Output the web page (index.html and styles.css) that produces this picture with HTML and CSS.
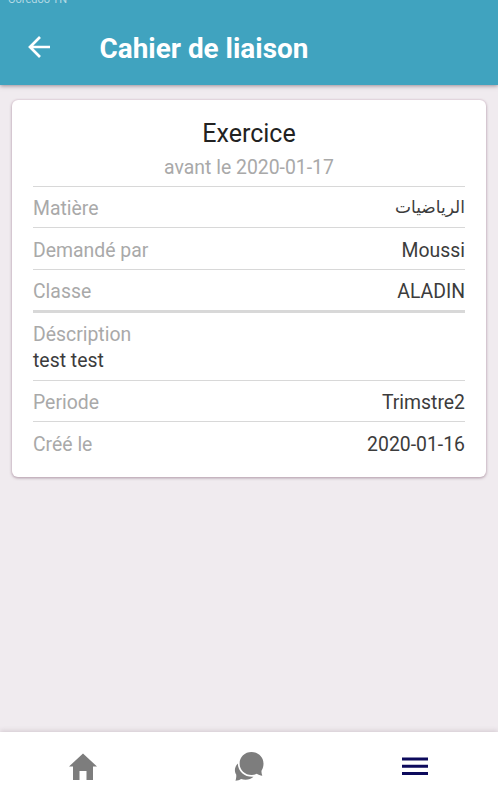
FILE: index.html
```html
<!DOCTYPE html>
<html lang="fr">
  <head>
    <meta charset="UTF-8" />
    <title>Cahier de liaison</title>
    <meta name="viewport" content="width=device-width, initial-scale=1.0" />
    <link rel="stylesheet" href="styles.css">
  </head>
  <body>
    <header>
      <div class="status">Ooredoo TN</div>
      <div class="toolbar">
        <a href="#" class="back" aria-label="Retour">
          <svg width="22" height="22" viewBox="0 0 22 22" fill="none" stroke="#fff" stroke-width="2.7">
            <path d="M22 11H2M12 1L2 11l10 10" />
          </svg>
        </a>
        <h1>Cahier de liaison</h1>
      </div>
    </header>

    <main>
      <div class="card">
        <div class="card-head">
          <h2>Exercice</h2>
          <p>avant le 2020-01-17</p>
        </div>
        <div class="row">
          <span class="label">Matière</span>
          <span class="arabic" lang="ar" dir="rtl">الرياضيات</span>
        </div>
        <div class="row">
          <span class="label">Demandé par</span>
          <span>Moussi</span>
        </div>
        <div class="row">
          <span class="label">Classe</span>
          <span>ALADIN</span>
        </div>
        <div class="description">
          <div class="label">Déscription</div>
          <div>test test</div>
        </div>
        <div class="row">
          <span class="label">Periode</span>
          <span>Trimstre2</span>
        </div>
        <div class="row">
          <span class="label">Créé le</span>
          <span>2020-01-16</span>
        </div>
      </div>
    </main>

    <nav>
      <a href="#" aria-label="Accueil">
        <svg width="28" height="28" viewBox="0 0 28 28" fill="#7d7d7d">
          <path d="M14 0.500L28 13.500H24v13.500h-6.500V18h-7v9H4V13.500H0z" />
        </svg>
      </a>
      <a href="#" aria-label="Messages">
        <svg width="30" height="30" viewBox="0 0 30 30" fill="#7d7d7d">
          <path d="M3.800 11.500C.8 14.500 0 19 2.200 22.500c.3 2-.1 4-.7 6.300 2-.2 4-.7 5.500-1.800 4.500 1.600 9.500.8 12.500-2.200C11.500 25.500 4 20 3.800 11.500z" />
          <path d="M17.500 0C10.800 0 5.600 4.900 5.600 11.500s5.300 11.500 12 11.500c2 0 3.700-.4 5.200-1.200 1.700 1.100 3.500 1.700 5.500 1.900-.8-1.900-1-3.700-.7-5.300 1.300-1.900 1.900-4.200 1.900-6.700C29.500 5 24.200 0 17.500 0z" />
        </svg>
      </a>
      <a href="#" aria-label="Menu">
        <svg width="28" height="28" viewBox="0 0 28 28" fill="#0c0a5c">
          <path d="M1 4.500h26v3H1zM1 11.700h26v3H1zM1 19h26v3H1z" />
        </svg>
      </a>
    </nav>
  </body>
</html>
```
FILE: styles.css
```css
* {
  box-sizing: border-box;
}

body {
  display: flex;
  flex-direction: column;
  height: 100vh;
  margin: 0;
  overflow: hidden;
  background: #f0ebef;
  color: #3c3c3c;
  font-family: Roboto, "Noto Sans", sans-serif;
  font-size: 19.4px;
}

header {
  height: 85px;
  background: #40a3bf;
  color: #fff;
  box-shadow: 0 1px 4px rgba(70, 45, 60, 0.5);
}

.status {
  height: 9px;
  margin-top: -5px;
  padding-left: 8px;
  color: #b4dae5;
  font-size: 11px;
  line-height: 9px;
}

.toolbar {
  display: flex;
  align-items: center;
  height: 85px;
  padding-left: 28px;
}

.back {
  display: flex;
  width: 71.5px;
}

h1 {
  margin: 3px 0 0;
  font-size: 27.9px;
  font-weight: 700;
}

main {
  flex: 1;
  padding: 15px 12px;
}

.card {
  height: 377px;
  padding: 16px 21px 0;
  background: #fff;
  border-radius: 6px;
  box-shadow: 0 0 2px #d9bfcd, 0 1px 3px rgba(90, 60, 80, 0.5);
}

.card-head {
  height: 70px;
  padding-top: 1px;
  text-align: center;
}

h2 {
  margin: 0;
  color: #222;
  font-size: 25px;
  font-weight: 400;
  line-height: 34px;
}

.card-head p {
  margin: 0;
  color: #a9a9a9;
  line-height: 34px;
}

.row {
  display: flex;
  align-items: center;
  justify-content: space-between;
  height: 41.4px;
  padding-top: 3px;
  border-top: 1px solid #d8d8d8;
}

.label {
  color: #a9a9a9;
}

.arabic {
  padding-bottom: 5px;
  font-family: "Noto Sans", "DejaVu Sans", sans-serif;
  font-size: 17px;
}

.description {
  height: 69.8px;
  padding-top: 8.5px;
  border-top: 3px solid #d8d8d8;
  line-height: 26.5px;
}

nav {
  display: flex;
  align-items: center;
  height: 68px;
  padding-top: 2px;
  background: #fff;
  box-shadow: 0 -1px 5px rgba(90, 60, 80, 0.2);
}

nav a {
  display: flex;
  flex: 1;
  justify-content: center;
}
```
